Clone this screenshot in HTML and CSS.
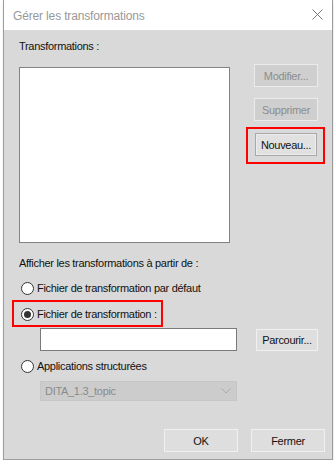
FILE: index.html
```html
<!DOCTYPE html>
<html lang="fr">
<head>
    <meta charset="UTF-8">
    <title>Gérer les transformations</title>
    <link rel="stylesheet" href="styles.css">
</head>
<body>

<div class="window">
    <div class="titlebar">
        <span class="title">Gérer les transformations</span>
        <svg class="close" width="11" height="11" viewBox="0 0 11 11">
            <path d="M0.5 0.5 L10.5 10.5 M10.5 0.5 L0.5 10.5" stroke="#7a7a7a" stroke-width="1" fill="none"/>
        </svg>
    </div>

    <div class="content">
        <div class="label first">Transformations :</div>

        <div class="top-row">
            <div class="listbox"></div>
            <div class="side-buttons">
                <button class="btn disabled">Modifier...</button>
                <button class="btn disabled gap">Supprimer</button>
                <div class="highlight box-new">
                    <button class="btn focused">Nouveau...</button>
                </div>
            </div>
        </div>

        <div class="label second">Afficher les transformations à partir de :</div>

        <div class="radio-row r1">
            <span class="radio"></span>
            <span>Fichier de transformation par défaut</span>
        </div>

        <div class="highlight box-radio">
            <div class="radio-row">
                <span class="radio checked"></span>
                <span>Fichier de transformation :</span>
            </div>
        </div>

        <div class="file-row">
            <div class="textbox"></div>
            <button class="btn browse">Parcourir...</button>
        </div>

        <div class="radio-row r3">
            <span class="radio"></span>
            <span>Applications structurées</span>
        </div>

        <div class="select disabled-select">
            <span>DITA_1.3_topic</span>
            <svg width="10" height="6" viewBox="0 0 10 6">
                <path d="M0.5 0.5 L5 5 L9.5 0.5" stroke="#a8a8a8" stroke-width="1" fill="none"/>
            </svg>
        </div>

        <div class="footer">
            <button class="btn wide">OK</button>
            <button class="btn wide">Fermer</button>
        </div>
    </div>
</div>

</body>
</html>
```

FILE: styles.css
```css
body {
    margin: 0;
    padding: 0;
    background-color: #ffffff;
    font-family: "Liberation Sans", Arial, sans-serif;
    font-size: 11px;
    color: #111;
}
.window {
    margin-left: 3px;
    width: 330px;
    height: 460px;
    box-sizing: border-box;
    border: 1px solid #9c9c9c;
    border-top: none;
    background-color: #d9d9d9;
    display: flex;
    flex-direction: column;
    box-shadow: 1px 2px 4px rgba(0,0,0,0.12);
}
.titlebar {
    height: 30px;
    background-color: white;
    display: flex;
    align-items: center;
    justify-content: space-between;
    padding: 0 9px 0 9px;
}
.title {
    font-size: 12px;
    color: #999;
    letter-spacing: -0.15px;
    margin-top: 1px;
}
.close {
    margin-top: -1px;
}
.content {
    flex: 1;
    display: flex;
    flex-direction: column;
    padding: 0 7px 7px 15px;
}
.label {
    line-height: 13px;
    letter-spacing: -0.3px;
}
.label.first {
    margin-top: 10px;
}
.top-row {
    display: flex;
    margin-top: 11px;
}
.listbox {
    width: 213px;
    height: 176px;
    box-sizing: border-box;
    margin-top: 3px;
    background-color: white;
    border: 1px solid #828282;
}
.side-buttons {
    display: flex;
    flex-direction: column;
    align-items: flex-start;
    margin-left: 24px;
}
.btn {
    font-family: "Liberation Sans", Arial, sans-serif;
    font-size: 11px;
    letter-spacing: -0.3px;
    color: #111;
    width: 64px;
    height: 23px;
    padding: 0;
    background-color: #dedede;
    border: 1px solid #f0f0f0;
    box-sizing: border-box;
}
.btn.disabled {
    color: #8d8d8d;
    background-color: #cfcfcf;
    border-color: #ebebeb;
}
.btn.gap {
    margin-top: 11px;
}
.btn.focused {
    border-color: #a8a8a8;
    box-shadow: inset 0 0 0 1px #ececec;
    background-color: #e1e1e1;
    width: 62px;
}
.highlight {
    border: 2px solid #ff0000;
    box-sizing: border-box;
}
.box-new {
    margin-top: 6px;
    margin-left: -8px;
    width: 79px;
    height: 37px;
    padding: 4px 0 0 7px;
}
.label.second {
    margin-top: 14px;
}
.radio-row {
    display: flex;
    align-items: center;
    height: 16px;
    letter-spacing: -0.3px;
}
.radio-row .radio {
    margin-left: 2px;
    margin-right: 3px;
}
.r1 {
    margin-top: 10px;
}
.radio {
    width: 13px;
    height: 13px;
    box-sizing: border-box;
    border: 1px solid #333;
    border-radius: 50%;
    background-color: white;
    display: flex;
    align-items: center;
    justify-content: center;
}
.radio.checked::after {
    content: "";
    width: 7px;
    height: 7px;
    border-radius: 50%;
    background-color: #333;
}
.box-radio {
    margin-top: 4px;
    margin-left: -7px;
    width: 151px;
    height: 27px;
    padding: 4px 0 0 5px;
}
.file-row {
    display: flex;
    align-items: flex-start;
    margin-top: 1px;
    margin-left: 21px;
}
.textbox {
    width: 197px;
    height: 23px;
    box-sizing: border-box;
    background-color: white;
    border: 1px solid #7a7a7a;
}
.btn.browse {
    margin-left: 19px;
    margin-top: 1px;
    width: 62px;
    height: 22px;
}
.r3 {
    margin-top: 7px;
}
.select {
    margin-top: 7px;
    margin-left: 21px;
    width: 197px;
    height: 20px;
    box-sizing: border-box;
    display: flex;
    align-items: center;
    justify-content: space-between;
    padding: 0 5px 0 4px;
}
.disabled-select {
    background-color: #cccccc;
    border: 1px solid #c6c6c6;
    color: #8a8a8a;
    letter-spacing: -0.3px;
}
.footer {
    margin-top: auto;
    display: flex;
    justify-content: flex-end;
    gap: 13px;
}
.btn.wide {
    width: 74px;
}
```
